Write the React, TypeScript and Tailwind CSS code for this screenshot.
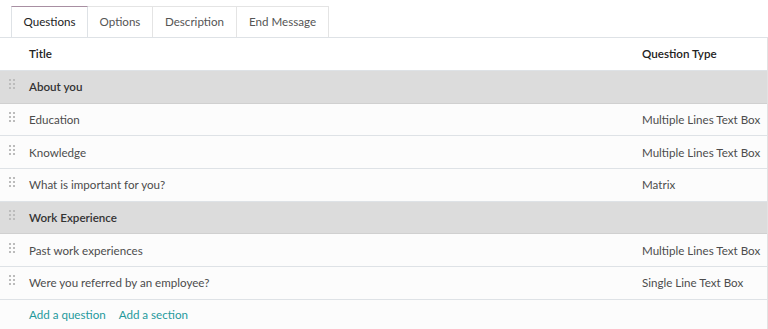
const ROWS: { title: string; type?: string; section?: boolean }[] = [
  { title: 'About you', section: true },
  { title: 'Education', type: 'Multiple Lines Text Box' },
  { title: 'Knowledge', type: 'Multiple Lines Text Box' },
  { title: 'What is important for you?', type: 'Matrix' },
  { title: 'Work Experience', section: true },
  { title: 'Past work experiences', type: 'Multiple Lines Text Box' },
  { title: 'Were you referred by an employee?', type: 'Single Line Text Box' },
];

const TABS = [
  { label: 'Questions', w: 'w-[77px]' },
  { label: 'Options', w: 'w-[65px]' },
  { label: 'Description', w: 'w-[84px]' },
  { label: 'End Message', w: 'w-[92px]' },
];

function Handle() {
  return (
    <svg width="7" height="11" viewBox="0 0 7 11" className="fill-[#bcbcbc]">
      <rect x="0" y="0" width="2" height="2" />
      <rect x="4" y="0" width="2" height="2" />
      <rect x="0" y="4" width="2" height="2" />
      <rect x="4" y="4" width="2" height="2" />
      <rect x="0" y="8" width="2" height="2" />
      <rect x="4" y="8" width="2" height="2" />
    </svg>
  );
}

export default function App() {
  return (
    <div className="w-[768px] h-[329px] overflow-hidden bg-white font-['Lato',sans-serif] text-[11.6px] text-[#4c4c4c]">
      <div className="pt-[6px] pl-[11px] flex border-b border-[#dee2e6]">
        {TABS.map((t, i) => (
          <div
            key={t.label}
            className={
              i === 0
                ? `${t.w} h-[31px] flex items-center justify-center border-x border-t border-[#dee2e6] border-t-[#a88fa2] -mb-px bg-white text-[#222]`
                : `${t.w} h-[31px] flex items-center justify-center border-r border-t border-[#e4e4e4] text-[#555]`
            }
          >
            {t.label}
          </div>
        ))}
      </div>
      <div className="border-r border-[#e2e2e2]">
        <div className="h-[33px] flex items-center font-semibold text-[#222] border-b border-[#dee2e6]">
          <div className="pl-[29px] flex-1">Title</div>
          <div className="w-[125px] whitespace-nowrap">Question Type</div>
        </div>
        {ROWS.map(r => (
          <div
            key={r.title}
            className={
              r.section
                ? 'h-[32.7px] flex items-center bg-[#dcdcdc] font-semibold text-[#333] border-b border-[#d0d0d0]'
                : 'h-[32.7px] flex items-center bg-[#fcfcfc] border-b border-[#dee2e6]'
            }
          >
            <div className="w-[29px] pl-[9px] flex items-center -mt-[4px]">
              <Handle />
            </div>
            <div className="flex-1">{r.title}</div>
            <div className="w-[125px] whitespace-nowrap">{r.type}</div>
          </div>
        ))}
        <div className="h-[30px] flex items-center pl-[29px] gap-[13px] bg-[#fcfcfc] text-[#1f9a9c]">
          <span>Add a question</span>
          <span>Add a section</span>
        </div>
      </div>
    </div>
  );
}
